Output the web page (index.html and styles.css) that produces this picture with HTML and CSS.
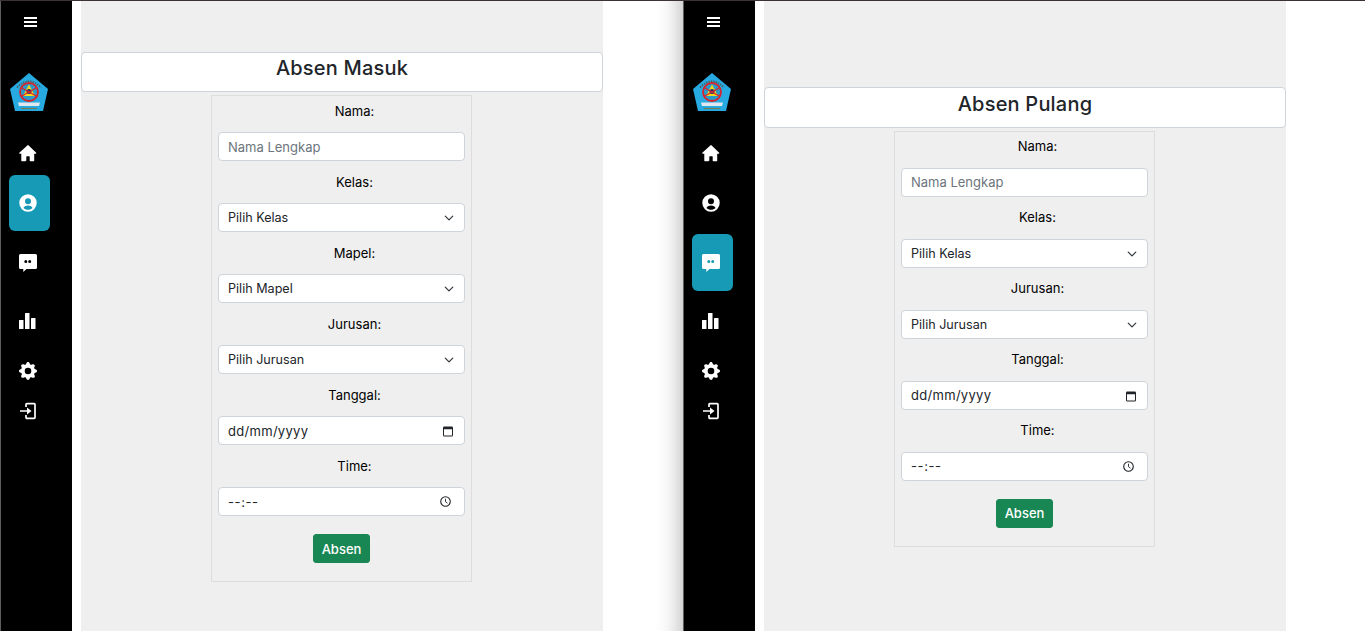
FILE: index.html
```html
<!DOCTYPE html>
<html lang="id">
<head>
  <title>Absen</title>
  <meta charset="utf-8">
  <link rel="stylesheet" href="styles.css">
</head>
<body>
<svg class="defs" width="0" height="0">
  <symbol id="i-home" viewBox="0 0 18 18"><path d="M7.300 16.800V12.700c0-.3.200-.5.500-.5h2.400c.3 0 .5.200.5.500v4.100c0 .3.200.5.500.5h3.500c.3 0 .5-.2.500-.5V9.700h1.600c.5 0 .7-.6.400-.9L9.400 1.200a.6.600 0 0 0-.8 0L.3 8.800c-.3.300-.1.900.4.900h1.600v7.100c0 .3.200.5.500.5h3.500c.3 0 .5-.2.500-.5z"/></symbol>
  <symbol id="i-user" viewBox="0 0 18 18"><path fill-rule="evenodd" d="M9 .3a8.700 8.700 0 1 1 0 17.400A8.700 8.700 0 0 1 9 .3zm0 4a3 3 0 1 0 0 6 3 3 0 0 0 0-6zm0 7.300c-2.400 0-4 1-4.500 2.400 1.100 1.100 2.700 1.800 4.500 1.800s3.400-.7 4.500-1.800c-.5-1.400-2.100-2.400-4.500-2.400z"/></symbol>
  <symbol id="i-chat" viewBox="0 0 18 18"><path fill-rule="evenodd" d="M1.500 0h15A1.500 1.500 0 0 1 18 1.500v12a1.500 1.500 0 0 1-1.500 1.500H7.500L4.300 18v-3H1.500A1.500 1.500 0 0 1 0 13.500v-12A1.500 1.500 0 0 1 1.500 0zm5.300 5.900a1.500 1.500 0 1 0 0 3 1.500 1.500 0 0 0 0-3zm3.900 0a1.500 1.500 0 1 0 0 3 1.500 1.500 0 0 0 0-3z"/></symbol>
  <symbol id="i-chart" viewBox="0 0 18 18"><rect x="0" y="8" width="4.500" height="9" rx=".5"/><rect x="6" y="1" width="4.500" height="16" rx=".5"/><rect x="12" y="6" width="4.500" height="11" rx=".5"/></symbol>
  <symbol id="i-gear" viewBox="0 0 16 16"><path d="M9.405 1.050c-.413-1.400-2.397-1.400-2.810 0l-.1.340a1.464 1.464 0 0 1-2.105.872l-.31-.17c-1.283-.698-2.686.705-1.987 1.987l.169.311c.446.820.023 1.841-.872 2.105l-.34.1c-1.400.413-1.400 2.397 0 2.810l.34.1a1.464 1.464 0 0 1 .872 2.105l-.17.31c-.698 1.283.705 2.686 1.987 1.987l.311-.169a1.464 1.464 0 0 1 2.105.872l.1.340c.413 1.400 2.397 1.400 2.810 0l.1-.34a1.464 1.464 0 0 1 2.105-.872l.31.17c1.283.698 2.686-.705 1.987-1.987l-.169-.311a1.464 1.464 0 0 1 .872-2.105l.34-.1c1.400-.413 1.400-2.397 0-2.810l-.34-.1a1.464 1.464 0 0 1-.872-2.105l.17-.31c.698-1.283-.705-2.686-1.987-1.987l-.311.169a1.464 1.464 0 0 1-2.105-.872l-.1-.34zM8 10.930a2.929 2.929 0 1 1 0-5.860 2.929 2.929 0 0 1 0 5.858z"/></symbol>
  <symbol id="i-logout" viewBox="0 0 18 18"><path d="M7 5V2.500c0-.5.400-.9.900-.9h7.200c.5 0 .9.400.9.900v13c0 .5-.4.900-.9.900H7.900c-.5 0-.9-.4-.9-.9V13" fill="none" stroke="currentColor" stroke-width="1.700"/><path d="M1 8.200h7V5.400L12.500 9 8 12.600V9.800H1z"/></symbol>
  <symbol id="i-logo" viewBox="0 0 38 38">
    <path d="M19 0 38 16 33 38H5L0 16z" fill="#27a9e1"/>
    <circle cx="19" cy="19" r="9" fill="#2a9ac8" stroke="#d8232a" stroke-width="1.800"/>
    <path d="M19 11.500 25 23H13z" fill="#f3d820"/>
    <circle cx="19" cy="18.500" r="2.500" fill="#26366d"/>
    <path d="M11 14.500l16 9M27 14.500l-16 9" stroke="#d8232a" stroke-width="1.200"/>
    <path d="M8 29.500h22l-1 3.500H9z" fill="#dfe8ee"/>
    <path d="M11 35.500h16" stroke="#6d7d55" stroke-width="1.200"/>
    <path d="M7 14.500Q19 2 31 14.500" fill="none" stroke="#4b5a50" stroke-width="1.500" stroke-dasharray="1.500 1"/>
  </symbol>
</svg>

<div class="split">
  <section class="panel">
    <nav class="sidebar">
      <a class="toggle" href="#"><span></span><span></span><span></span></a>
      <svg class="logo"><use href="#i-logo"/></svg>
      <ul class="menu">
        <li><a href="#"><svg class="ico"><use href="#i-home"/></svg></a></li>
        <li><a class="active" href="#"><svg class="ico"><use href="#i-user"/></svg></a></li>
        <li><a href="#"><svg class="ico"><use href="#i-chat"/></svg></a></li>
        <li><a href="#"><svg class="ico"><use href="#i-chart"/></svg></a></li>
        <li><a href="#"><svg class="ico"><use href="#i-gear"/></svg></a></li>
        <li><a href="#"><svg class="ico"><use href="#i-logout"/></svg></a></li>
      </ul>
    </nav>
    <main class="content masuk">
      <h1 class="heading">Absen Masuk</h1>
      <form class="absen">
        <label>Nama:</label>
        <input type="text" placeholder="Nama Lengkap">
        <label>Kelas:</label>
        <select><option>Pilih Kelas</option></select>
        <label>Mapel:</label>
        <select><option>Pilih Mapel</option></select>
        <label>Jurusan:</label>
        <select><option>Pilih Jurusan</option></select>
        <label>Tanggal:</label>
        <input class="tanggal" type="text" value="dd/mm/yyyy">
        <label>Time:</label>
        <input class="jam" type="text" value="--:--">
        <button type="button">Absen</button>
      </form>
    </main>
  </section>

  <section class="panel">
    <nav class="sidebar">
      <a class="toggle" href="#"><span></span><span></span><span></span></a>
      <svg class="logo"><use href="#i-logo"/></svg>
      <ul class="menu">
        <li><a href="#"><svg class="ico"><use href="#i-home"/></svg></a></li>
        <li><a href="#"><svg class="ico"><use href="#i-user"/></svg></a></li>
        <li><a class="active" href="#"><svg class="ico"><use href="#i-chat"/></svg></a></li>
        <li><a href="#"><svg class="ico"><use href="#i-chart"/></svg></a></li>
        <li><a href="#"><svg class="ico"><use href="#i-gear"/></svg></a></li>
        <li><a href="#"><svg class="ico"><use href="#i-logout"/></svg></a></li>
      </ul>
    </nav>
    <main class="content pulang">
      <h1 class="heading">Absen Pulang</h1>
      <form class="absen">
        <label>Nama:</label>
        <input type="text" placeholder="Nama Lengkap">
        <label>Kelas:</label>
        <select><option>Pilih Kelas</option></select>
        <label>Jurusan:</label>
        <select><option>Pilih Jurusan</option></select>
        <label>Tanggal:</label>
        <input class="tanggal" type="text" value="dd/mm/yyyy">
        <label>Time:</label>
        <input class="jam" type="text" value="--:--">
        <button type="button">Absen</button>
      </form>
    </main>
  </section>
</div>
</body>
</html>
```

FILE: styles.css
```css
html, body {
  margin: 0;
  padding: 0;
  height: 631px;
  overflow: hidden;
}
body {
  background: #fff;
  color: #212529;
  font-family: "Inter", "Open Sans", sans-serif;
  font-size: 13px;
  border-top: 1px solid #3d3135;
  box-sizing: border-box;
}
.defs {
  display: block;
  height: 0;
}

.split {
  display: grid;
  grid-template-columns: 683px 682px;
  height: 630px;
}
.panel {
  display: flex;
  height: 630px;
  overflow: hidden;
}
.panel:first-child {
  box-shadow: inset -30px 0 24px -28px rgba(0,0,0,0.3);
}

/* sidebar */
.sidebar {
  flex: 0 0 71px;
  background: #000;
  border-left: 1px solid #5e5e5e;
  display: flex;
  flex-direction: column;
  align-items: flex-start;
}
.toggle {
  display: flex;
  flex-direction: column;
  gap: 2px;
  width: 13px;
  margin: 16px 0 0 23px;
}
.toggle span {
  height: 2px;
  background: #fff;
}
.logo {
  width: 38px;
  height: 38px;
  margin: 46px 0 0 9px;
  filter: blur(0.3px);
}
.menu {
  list-style: none;
  margin: 19px 0 0;
  padding: 0;
  width: 100%;
}
.menu a {
  display: flex;
  align-items: center;
  justify-content: center;
  width: 41px;
  height: 40px;
  margin-left: 8px;
  border-radius: 6px;
  color: #fff;
  padding-right: 3px;
  box-sizing: border-box;
}
.menu li:nth-child(1) a { height: 45px; }
.menu li:nth-child(2) a { height: 56px; margin-bottom: 3px; }
.menu li:nth-child(3) a { height: 57px; }
.menu li:nth-child(4) a { height: 60px; }
.menu a.active {
  background: #169ab5;
}
.ico {
  width: 18px;
  height: 18px;
  fill: currentColor;
  overflow: visible;
}

/* content */
.content {
  flex: 0 0 522px;
  margin-left: 9px;
  background: #efefef;
}
.masuk {
  padding-top: 51px;
}
.pulang {
  padding-top: 86px;
}
.heading {
  margin: 0;
  height: 40px;
  box-sizing: border-box;
  background: #fff;
  border: 1px solid #ced4da;
  border-radius: 4px;
  font-size: 20px;
  font-weight: 500;
  letter-spacing: 0.2px;
  line-height: 30px;
  text-align: center;
}
.pulang .heading {
  height: 41px;
  line-height: 32px;
}
.absen {
  display: flex;
  flex-direction: column;
  align-items: center;
  width: 261px;
  margin: 3px 0 0 130px;
  padding: 6px 6px 18px;
  box-sizing: border-box;
  border: 1px solid #ddd;
}
.absen label {
  width: 100%;
  height: 30px;
  padding-left: 26px;
  box-sizing: border-box;
  color: #000;
  line-height: 18px;
  text-align: center;
}
.pulang .absen label {
  line-height: 16px;
}
.absen input, .absen select {
  width: 100%;
  height: 29px;
  margin-bottom: 12px;
  padding: 0 9px;
  box-sizing: border-box;
  background-color: #fff;
  border: 1px solid #ced4da;
  border-radius: 4px;
  color: #212529;
  font: inherit;
}
.pulang .absen input, .pulang .absen select {
  padding-bottom: 1px;
}
.absen input::placeholder {
  color: #6c757d;
}
.absen select {
  appearance: none;
  font-size: 12.6px;
  background-image: url("data:image/svg+xml,%3csvg xmlns='http://www.w3.org/2000/svg' viewBox='0 0 16 16'%3e%3cpath fill='none' stroke='%23343a40' stroke-linecap='round' stroke-linejoin='round' stroke-width='2' d='m2 5 6 6 6-6'/%3e%3c/svg%3e");
  background-repeat: no-repeat;
  background-position: right 10px center;
  background-size: 10px 10px;
}
.absen .tanggal {
  letter-spacing: 0.3px;
  background-image: url("data:image/svg+xml,%3csvg xmlns='http://www.w3.org/2000/svg' viewBox='0 0 12 13'%3e%3cpath fill='%23212529' d='M1.500 1h9A1.500 1.500 0 0 1 12 2.500v9a1.500 1.500 0 0 1-1.500 1.500h-9A1.500 1.500 0 0 1 0 11.500v-9A1.500 1.500 0 0 1 1.500 1zM1.200 4.500v7c0 .2.100.3.300.3h9c.2 0 .3-.1.300-.3v-7z'/%3e%3c/svg%3e");
  background-repeat: no-repeat;
  background-position: right 11px center;
  background-size: 10px 12px;
}
.absen .jam {
  letter-spacing: 0.6px;
  background-image: url("data:image/svg+xml,%3csvg xmlns='http://www.w3.org/2000/svg' viewBox='0 0 12 12'%3e%3ccircle cx='6' cy='6' r='5.200' fill='none' stroke='%23212529' stroke-width='1.200'/%3e%3cpath fill='none' stroke='%23212529' d='M6 3v3.200l2.200 1.600'/%3e%3c/svg%3e");
  background-repeat: no-repeat;
  background-position: right 13px center;
  background-size: 11px 11px;
}
.absen button {
  width: 57px;
  height: 29px;
  margin-top: 6px;
  background: #198754;
  border: 1px solid #198754;
  border-radius: 3px;
  color: #fff;
  font: inherit;
  font-weight: 500;
}
.pulang .absen button {
  padding-bottom: 3px;
}
```
